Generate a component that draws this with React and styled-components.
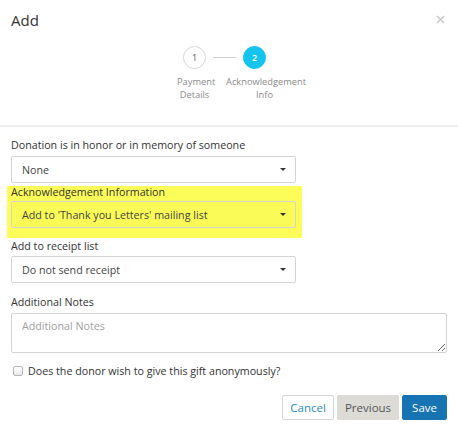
import React from 'react';
import styled, { createGlobalStyle } from 'styled-components';

const GlobalStyle = createGlobalStyle`
    html, body {
        margin: 0;
        padding: 0;
        background: #fff;
        font-family: "Open Sans", "Noto Sans", Arial, sans-serif;
        color: #333;
    }
`

const Modal = styled.div`
    width: 458px;
    height: 432px;
    background: #fff;
    box-sizing: border-box;
`

const Header = styled.div`
    display: flex;
    justify-content: space-between;
    align-items: center;
    padding: 10px 12px 0 11px;
    height: 20px;
`

const Title = styled.h4`
    margin: 0;
    font-size: 15px;
    font-weight: 400;
    color: #333;
`

const Close = styled.button`
    border: none;
    background: none;
    padding: 0;
    width: 10px;
    height: 10px;
    display: flex;
    cursor: pointer;
`

const Stepper = styled.div`
    padding: 18px 0 0 183px;
    height: 99px;
    box-sizing: border-box;
    border-bottom: 2px solid #eee;
    margin-top: -2px;
`

const StepRow = styled.div`
    display: flex;
    align-items: center;
`

const Circle = styled.div`
    width: 23px;
    height: 23px;
    border-radius: 50%;
    box-sizing: border-box;
    border: 1px solid ${p => (p.active ? '#14c4ee' : '#d6d6d6')};
    background: ${p => (p.active ? '#14c4ee' : '#fff')};
    color: ${p => (p.active ? '#fff' : '#555')};
    font-size: 9px;
    font-weight: ${p => (p.active ? 600 : 400)};
    display: flex;
    align-items: center;
    justify-content: center;
`

const Connector = styled.div`
    width: 23px;
    height: 1px;
    background: #cfcfcf;
    margin: 0 7px;
`

const LabelRow = styled.div`
    display: flex;
    margin-top: 6px;
`

const StepLabel = styled.div`
    font-size: 9.3px;
    line-height: 13px;
    color: #8a8a8a;
    text-align: center;
    margin-left: ${p => p.offset}px;
    width: ${p => p.w}px;
`

const Body = styled.div`
    padding: 10px 11px 0 11px;
`

const Label = styled.label`
    display: block;
    font-size: 10.7px;
    line-height: 16px;
    color: #333;
    margin: ${p => p.m || '0 0 3px 0'};
`

const Highlight = styled.div`
    background: #fdfd5a;
    margin: 3px 145px 0 -4px;
    padding: 0 6px 10px 4px;
    & > label {
        line-height: 12px;
    }
`

const Select = styled.div`
    width: 285px;
    height: 27px;
    box-sizing: border-box;
    border: 1px solid #d4d4d4;
    border-radius: 2px;
    background: ${p => (p.tinted ? '#fbfb58' : '#fff')};
    display: flex;
    align-items: center;
    justify-content: space-between;
    padding: 0 9px 0 10px;
    font-size: 10.7px;
    color: #444;
`

const Caret = styled.span`
    width: 0;
    height: 0;
    border-left: 3px solid transparent;
    border-right: 3px solid transparent;
    border-top: 3px solid #333;
`

const TextArea = styled.textarea`
    display: block;
    width: 436px;
    height: 40px;
    box-sizing: border-box;
    border: 1px solid #d4d4d4;
    border-radius: 2px;
    padding: 5px 10px;
    font-family: inherit;
    font-size: 10.7px;
    color: #444;
    resize: vertical;
    outline: none;
    &::placeholder {
        color: #a0a0a0;
    }
`

const CheckRow = styled.label`
    display: flex;
    align-items: center;
    margin: 10px 0 0 2px;
    height: 16px;
    font-size: 10.7px;
    color: #333;
`

const Box = styled.span`
    width: 8px;
    height: 8px;
    border: 1px solid #b5b5b5;
    border-radius: 2px;
    background: linear-gradient(#fff, #e8e8e8);
    margin-right: 5px;
`

const Footer = styled.div`
    display: flex;
    justify-content: flex-end;
    gap: 3px;
    margin-top: 16px;
`

const Button = styled.button`
    height: 25px;
    box-sizing: border-box;
    padding: 0 ${p => p.px}px;
    font-family: inherit;
    font-size: 11.5px;
    border-radius: 2px;
    cursor: pointer;
    border: 1px solid ${p => p.border};
    background: ${p => p.bg};
    color: ${p => p.color};
`

export default () => {
    return (
        <Modal>
            <GlobalStyle />
            <Header>
                <Title>Add</Title>
                <Close aria-label="close">
                    <svg width="9" height="9" viewBox="0 0 9 9">
                        <path d="M1 1L8 8M8 1L1 8" stroke="#c4c4c4" strokeWidth="1.3" />
                    </svg>
                </Close>
            </Header>
            <Stepper>
                <StepRow>
                    <Circle>1</Circle>
                    <Connector />
                    <Circle active>2</Circle>
                </StepRow>
                <LabelRow>
                    <StepLabel offset={-6} w={35}>Payment<br />Details</StepLabel>
                    <StepLabel offset={14} w={77}>Acknowledgement<br />Info</StepLabel>
                </LabelRow>
            </Stepper>
            <Body>
                <Label>Donation is in honor or in memory of someone</Label>
                <Select>None<Caret /></Select>
                <Highlight>
                    <Label m="0 0 3px 0">Acknowledgement Information</Label>
                    <Select tinted>Add to 'Thank you Letters' mailing list<Caret /></Select>
                </Highlight>
                <Label m="0 0 2px 0">Add to receipt list</Label>
                <Select>Do not send receipt<Caret /></Select>
                <Label m="11px 0 3px 0">Additional Notes</Label>
                <TextArea placeholder="Additional Notes" />
                <CheckRow>
                    <Box />
                    Does the donor wish to give this gift anonymously?
                </CheckRow>
                <Footer>
                    <Button px={7} border="#d6d6d6" bg="#fff" color="#2a88c6">Cancel</Button>
                    <Button px={7} border="#dcdbd6" bg="#dcdbd6" color="#555">Previous</Button>
                    <Button px={9} border="#1774b3" bg="#1774b3" color="#fff">Save</Button>
                </Footer>
            </Body>
        </Modal>
    )
}
